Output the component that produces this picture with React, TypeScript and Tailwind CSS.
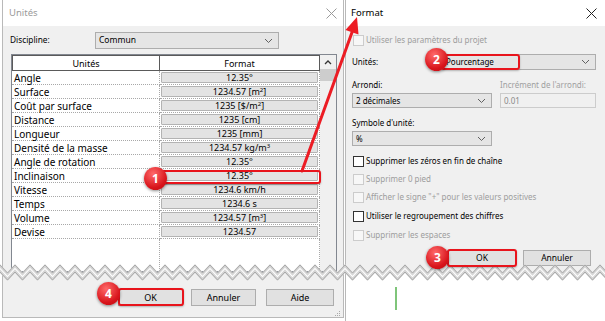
import React from "react";

const rows: [string, React.ReactNode][] = [
  ["Angle", "12.35°"],
  ["Surface", <>1234.57 [m<sup className="text-[6px]">2</sup>]</>],
  ["Coût par surface", <>1235 [$/m<sup className="text-[6px]">2</sup>]</>],
  ["Distance", "1235 [cm]"],
  ["Longueur", "1235 [mm]"],
  ["Densité de la masse", <>1234.57 kg/m<sup className="text-[6px]">3</sup></>],
  ["Angle de rotation", "12.35°"],
  ["Inclinaison", "12.35°"],
  ["Vitesse", "1234.6 km/h"],
  ["Temps", "1234.6 s"],
  ["Volume", <>1234.57 [m<sup className="text-[6px]">3</sup>]</>],
  ["Devise", "1234.57"],
];

function CloseX({ color }: { color: string }) {
  return (
    <svg width="11" height="11" viewBox="0 0 11 11">
      <path d="M0.5 0.5L10.5 10.5M10.5 0.5L0.5 10.5" stroke={color} strokeWidth="1" fill="none" />
    </svg>
  );
}

function Chevron() {
  return (
    <svg width="9" height="6" viewBox="0 0 9 6">
      <path d="M1 1l3.5 3.5L8 1" stroke="#606060" fill="none" strokeWidth="1" />
    </svg>
  );
}

function Select({ text, className }: { text: string; className: string }) {
  return (
    <div className={`flex items-center justify-between bg-[#e5e5e5] border border-[#adadad] pl-[3px] pr-[5px] ${className}`}>
      <span>{text}</span>
      <Chevron />
    </div>
  );
}

function Check({ label, disabled, className }: { label: string; disabled?: boolean; className: string }) {
  return (
    <div className={`flex items-center h-[12px] ${className}`}>
      <div
        className={`ml-[1px] w-[11px] h-[11px] border ${disabled ? "border-[#cccccc] bg-[#f7f7f7]" : "border-[#333333] bg-white"}`}
      />
      <span className={`ml-[2px] ${disabled ? "text-[#9d9d9d]" : "text-black"}`}>{label}</span>
    </div>
  );
}

function Zigzag() {
  const up: string[] = [];
  const low: string[] = [];
  for (let x = -15, i = 0; x <= 620; x += 7.5, i++) {
    const peak = i % 2 === 0;
    up.push(`${x},${peak ? 7 : 15}`);
    low.push(`${x},${peak ? 14 : 22}`);
  }
  const poly = [...up, ...low.slice().reverse()].join(" ");
  return (
    <svg className="absolute left-0 top-[258px] pointer-events-none" width="605" height="30" viewBox="0 0 605 30">
      <polygon points={poly} fill="#ffffff" />
      <polyline points={up.join(" ")} fill="none" stroke="#d6d6d6" strokeWidth="2.5" transform="translate(0,0.8)" />
      <polyline points={up.join(" ")} fill="none" stroke="#a9a9a9" strokeWidth="1" />
      <polyline points={low.join(" ")} fill="none" stroke="#d6d6d6" strokeWidth="2.5" transform="translate(0,-0.8)" />
      <polyline points={low.join(" ")} fill="none" stroke="#a9a9a9" strokeWidth="1" />
    </svg>
  );
}

export default function App() {
  return (
    <div className="relative w-[605px] h-[321px] overflow-hidden bg-white flex text-[9px] leading-none text-black font-['Segoe_UI','Noto_Sans',sans-serif]">
      {/* Left dialog: Unités */}
      <div className="ml-[2px] w-[342px] h-[318px] flex flex-col border-l border-r border-b border-[#b9b9b9] bg-[#f0f0f0]">
        <div className="h-[26px] shrink-0 bg-white flex items-center justify-between pl-[6px] pr-[6px]">
          <span className="text-[#9a9a9a] text-[9.5px]">Unités</span>
          <CloseX color="#9a9a9a" />
        </div>
        <div className="flex-1 flex flex-col pl-[8px] pr-[6px]">
          <div className="mt-[6px] h-[17px] flex items-center">
            <span className="w-[85px] -ml-[1px] text-[8.3px]">Discipline:</span>
            <Select text="Commun" className="w-[184px] h-[17px] text-[8.5px]" />
          </div>
          <div className="mt-[5px] h-[218px] border border-[#828790] bg-white flex">
            <div className="flex-1 flex flex-col">
              <div className="h-[16px] flex shrink-0">
                <div className="w-[148px] border border-[#5a5a5a] flex items-center justify-center">Unités</div>
                <div className="flex-1 border border-l-0 border-[#5a5a5a] flex items-center justify-center">Format</div>
              </div>
              {rows.map(([name, fmt]) => (
                <div key={name} className="h-[14px] flex shrink-0">
                  <div className="w-[148px] border-b border-r border-dotted border-[#a8a8a8] flex items-center pl-[2px] text-[10px]">
                    {name}
                  </div>
                  <div className="flex-1 border-b border-r border-dotted border-[#a8a8a8] p-[1px]">
                    <div className="h-full bg-[#e3e3e3] border border-[#b3b3b3] rounded-[1px] flex items-center justify-center">
                      <span>{fmt}</span>
                    </div>
                  </div>
                </div>
              ))}
              <div className="flex-1 flex">
                <div className="w-[148px] border-r border-dotted border-[#a8a8a8]" />
                <div className="flex-1 border-r border-dotted border-[#a8a8a8]" />
              </div>
            </div>
            <div className="w-[16px] flex flex-col bg-[#f0f0f0]">
              <div className="h-[14px] flex items-center justify-center">
                <svg width="8" height="5" viewBox="0 0 8 5">
                  <path d="M1 4l3-3 3 3" stroke="#333" strokeWidth="1.3" fill="none" />
                </svg>
              </div>
              <div className="h-[12px] bg-[#cdcdcd]" />
            </div>
          </div>
          <div className="mt-[17px] h-[17px] flex">
            <button className="ml-[107px] w-[65px] h-[17px] bg-[#e1e1e1] border border-[#adadad]">OK</button>
            <button className="ml-[8px] w-[65px] h-[17px] bg-[#e1e1e1] border border-[#adadad]">Annuler</button>
            <button className="ml-[10px] w-[68px] h-[17px] bg-[#e1e1e1] border border-[#adadad]">Aide</button>
          </div>
          <div className="flex justify-end mt-[5px] -mr-[4px]">
            <svg width="6" height="6" viewBox="0 0 6 6">
              <rect x="4" y="0" width="1" height="1" fill="#aaa" />
              <rect x="2" y="2" width="1" height="1" fill="#aaa" />
              <rect x="4" y="2" width="1" height="1" fill="#aaa" />
              <rect x="0" y="4" width="1" height="1" fill="#aaa" />
              <rect x="2" y="4" width="1" height="1" fill="#aaa" />
              <rect x="4" y="4" width="1" height="1" fill="#aaa" />
            </svg>
          </div>
        </div>
      </div>

      {/* Right dialog: Format */}
      <div className="ml-[1px] flex-1 h-full flex flex-col border-l border-[#b9b9b9]">
        <div className="h-[26px] shrink-0 bg-white flex items-center justify-between pl-[5px] pr-[8px]">
          <span className="text-[9.5px]">Format</span>
          <CloseX color="#222" />
        </div>
        <div className="h-[247px] shrink-0 bg-[#f0f0f0] flex flex-col pl-[6px] pr-[9px] text-[8px]">
          <Check label="Utiliser les paramètres du projet" disabled className="mt-[8px]" />
          <div className="mt-[8px] h-[16px] flex items-center">
            <span className="w-[90px]">Unités:</span>
            <Select text="Pourcentage" className="flex-1 h-[16px]" />
          </div>
          <div className="mt-[8px] h-[14px] flex items-center">
            <span className="w-[148px]">Arrondi:</span>
            <span className="text-[#a0a0a0]">Incrément de l'arrondi:</span>
          </div>
          <div className="mt-[1px] h-[15px] flex">
            <Select text="2 décimales" className="w-[140px] h-[15px]" />
            <div className="ml-[8px] flex-1 h-[15px] border border-[#cccccc] bg-[#f0f0f0] flex items-center pl-[3px] text-[#8a8a8a]">
              0.01
            </div>
          </div>
          <div className="mt-[8px] h-[14px] flex items-center">Symbole d'unité:</div>
          <div className="mt-[1px] h-[15px] flex">
            <Select text="%" className="w-[140px] h-[15px]" />
          </div>
          <Check label="Supprimer les zéros en fin de chaîne" className="mt-[9px]" />
          <Check label="Supprimer 0 pied" disabled className="mt-[6px]" />
          <Check label={'Afficher le signe "+" pour les valeurs positives'} disabled className="mt-[6px]" />
          <Check label="Utiliser le regroupement des chiffres" className="mt-[7px]" />
          <Check label="Supprimer les espaces" disabled className="mt-[7px]" />
          <div className="mt-[9px] h-[16px] flex justify-end pr-[5px] text-[8.5px]">
            <button className="w-[68px] h-[16px] bg-[#e1e1e1] border border-[#0078d7]">OK</button>
            <button className="ml-[7px] w-[68px] h-[16px] bg-[#e1e1e1] border border-[#adadad]">Annuler</button>
          </div>
        </div>
        <div className="flex-1 bg-white">
          <div className="ml-[49px] mt-[14px] w-[2px] h-[23px] bg-[#7fc57a]" />
        </div>
      </div>

      <Zigzag />

      {/* Red arrow */}
      <svg className="absolute left-0 top-0 pointer-events-none" width="605" height="321" viewBox="0 0 605 321">
        <line x1="302" y1="171" x2="352.5" y2="31" stroke="#ec1c24" strokeWidth="3" strokeLinecap="round" />
        <polygon points="357,17 358.5,34.5 345.5,30" fill="#ec1c24" />
      </svg>

      {/* Red rectangles */}
      <div className="absolute left-[158px] top-[170px] w-[163px] h-[14px] border-2 border-[#e8141c] rounded-[3px] shadow-[0_1px_2px_rgba(0,0,0,0.25)]" />
      <div className="absolute left-[441px] top-[54px] w-[79px] h-[16px] border-2 border-[#e8141c] rounded-[3px] shadow-[0_1px_2px_rgba(0,0,0,0.25)]" />
      <div className="absolute left-[447px] top-[249px] w-[70px] h-[18px] border-2 border-[#e8141c] rounded-[3px] shadow-[0_1px_2px_rgba(0,0,0,0.25)]" />
      <div className="absolute left-[118px] top-[288px] w-[66px] h-[18px] border-2 border-[#e8141c] rounded-[3px] shadow-[0_1px_2px_rgba(0,0,0,0.25)]" />

      {/* Callouts */}
      <div className="absolute left-[144px] top-[167px] w-[23px] h-[23px] rounded-full bg-[radial-gradient(circle_at_40%_30%,#ff6a6a,#d8141b_65%,#b80e14)] shadow-[0_1px_3px_rgba(0,0,0,0.45)] flex items-center justify-center text-white font-bold text-[12px] font-['Noto_Sans',sans-serif]">1</div>
      <div className="absolute left-[425px] top-[48px] w-[23px] h-[23px] rounded-full bg-[radial-gradient(circle_at_40%_30%,#ff6a6a,#d8141b_65%,#b80e14)] shadow-[0_1px_3px_rgba(0,0,0,0.45)] flex items-center justify-center text-white font-bold text-[12px] font-['Noto_Sans',sans-serif]">2</div>
      <div className="absolute left-[426px] top-[246px] w-[23px] h-[23px] rounded-full bg-[radial-gradient(circle_at_40%_30%,#ff6a6a,#d8141b_65%,#b80e14)] shadow-[0_1px_3px_rgba(0,0,0,0.45)] flex items-center justify-center text-white font-bold text-[12px] font-['Noto_Sans',sans-serif]">3</div>
      <div className="absolute left-[97px] top-[282px] w-[23px] h-[23px] rounded-full bg-[radial-gradient(circle_at_40%_30%,#ff6a6a,#d8141b_65%,#b80e14)] shadow-[0_1px_3px_rgba(0,0,0,0.45)] flex items-center justify-center text-white font-bold text-[12px] font-['Noto_Sans',sans-serif]">4</div>
    </div>
  );
}
